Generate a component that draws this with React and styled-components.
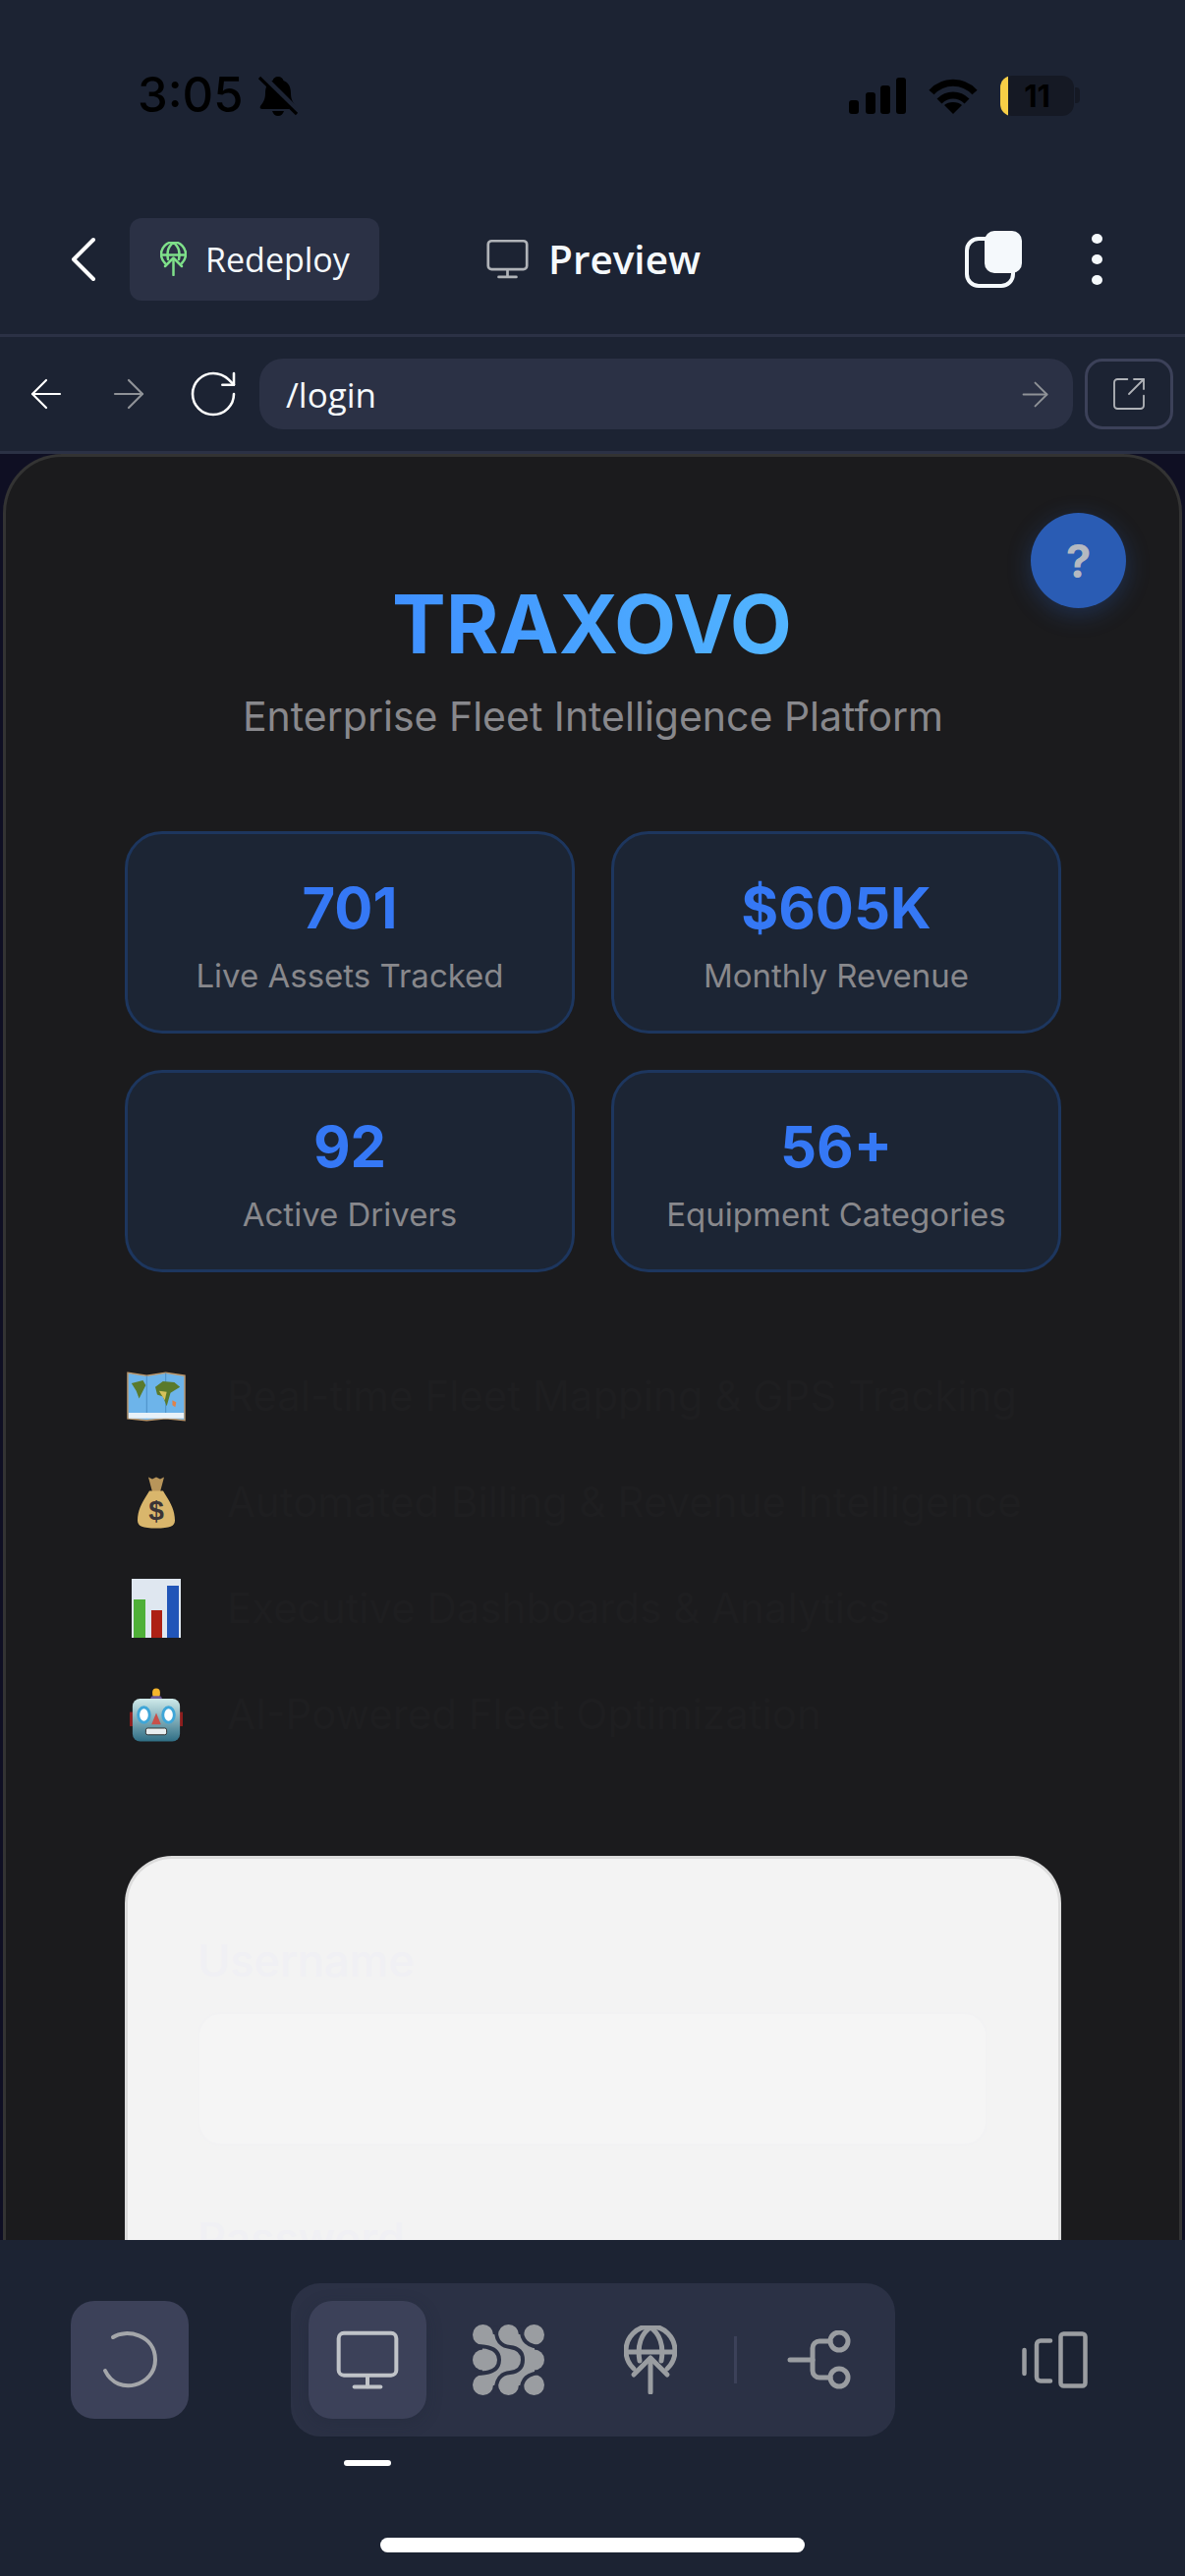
import React from 'react';
import styled, { createGlobalStyle } from 'styled-components';
import {
  ArrowLeft,
  ArrowRight,
  ChevronLeft,
  RotateCw,
  SquareArrowOutUpRight,
} from 'lucide-react';

const GlobalStyle = createGlobalStyle`
  html, body {
    margin: 0;
    padding: 0;
    background: #1c2333;
  }
  * { box-sizing: border-box; }
`;

const Phone = styled.div`
  width: 1206px;
  height: 2622px;
  display: flex;
  flex-direction: column;
  overflow: hidden;
  background: #1c2333;
  font-family: "Open Sans", "Noto Sans", sans-serif;
  color: #f5f9fc;
`;

const StatusBar = styled.div`
  height: 187px;
  flex: none;
  padding: 67px 113px 0 140px;
  display: flex;
  justify-content: space-between;
  align-items: flex-start;
  color: #000;
`;

const Time = styled.div`
  display: flex;
  align-items: center;
  gap: 15px;
  height: 60px;
  font: 500 49px/60px "Inter", sans-serif;
`;

const StatusIcons = styled.div`
  display: flex;
  align-items: center;
  gap: 23px;
  height: 60px;
`;

const Battery = styled.div`
  position: relative;
  width: 75px;
  height: 41px;
  border-radius: 12px;
  background: linear-gradient(90deg, #f7ce46 0 11%, #151924 11%);
  font: 700 31px/41px "Inter", sans-serif;
  text-align: center;

  &::after {
    content: '';
    position: absolute;
    right: -6px;
    top: 12px;
    width: 5px;
    height: 16px;
    border-radius: 0 4px 4px 0;
    background: #151924;
  }
`;

const Header = styled.div`
  height: 156px;
  flex: none;
  padding: 0 84px 0 45px;
  display: flex;
  align-items: center;
  border-bottom: 3px solid #2b3145;
`;

const BackButton = styled.div`
  width: 87px;
  flex: none;
  display: flex;
  color: #fff;
`;

const Redeploy = styled.div`
  width: 254px;
  height: 84px;
  flex: none;
  display: flex;
  align-items: center;
  gap: 19px;
  padding-left: 31px;
  border-radius: 12px;
  background: #2b3145;
  font-size: 34px;
  color: #f5f9fc;
`;

const PreviewTitle = styled.div`
  margin-left: 109px;
  display: flex;
  align-items: center;
  gap: 20px;
  font-size: 40.5px;
  font-weight: 600;
  flex: 1;
`;

const HeaderActions = styled.div`
  display: flex;
  align-items: center;
  gap: 71px;
`;

const DotMenu = styled.div`
  display: flex;
  flex-direction: column;
  gap: 11px;
  span {
    width: 11px;
    height: 10px;
    border-radius: 50%;
    background: #f5f9fc;
  }
`;

const UrlRow = styled.div`
  height: 119px;
  flex: none;
  padding: 0 12px 0 23px;
  display: flex;
  align-items: center;
  border-bottom: 3px solid #2b3145;
`;

const NavIcon = styled.div`
  width: ${(props) => props.$width}px;
  flex: none;
  display: flex;
  color: ${(props) => (props.$muted ? '#8f9297' : '#fff')};
`;

const UrlBox = styled.div`
  width: 828px;
  height: 72px;
  flex: none;
  display: flex;
  align-items: center;
  justify-content: space-between;
  padding: 0 18px 0 27px;
  border-radius: 24px;
  background: #2b3145;
  font-size: 35px;
  color: #f5f9fc;
`;

const OpenButton = styled.div`
  width: 90px;
  height: 72px;
  flex: none;
  margin-left: 12px;
  display: flex;
  align-items: center;
  justify-content: center;
  border: 3px solid #3c4159;
  border-radius: 18px;
  color: #b0b3b8;
`;

const Viewport = styled.div`
  flex: 1;
  min-height: 0;
  overflow: hidden;
  background: #0f0f23;
  padding: 0 3px;
`;

const Panel = styled.div`
  position: relative;
  height: 1900px;
  padding: 130px 120px 0 121px;
  background: #1b1b1d;
  border: 3px solid #333;
  border-bottom: 0;
  border-radius: 60px 60px 0 0;
`;

const HelpButton = styled.div`
  position: absolute;
  top: 57px;
  right: 54px;
  width: 97px;
  height: 97px;
  display: flex;
  align-items: center;
  justify-content: center;
  border-radius: 50%;
  background: #2a5cb4;
  box-shadow: 0 6px 24px rgba(42, 100, 200, 0.3);
  font: 700 46px/1 "Inter", sans-serif;
  color: #b5b9c1;
`;

const Brand = styled.div`
  width: 405px;
  margin-left: 272px;
  white-space: nowrap;
  font: 700 82px/1 "Inter", sans-serif;
  background: linear-gradient(90deg, #3f90ff, #52b5ff);
  -webkit-background-clip: text;
  background-clip: text;
  color: transparent;
`;

const Tagline = styled.div`
  margin-top: 27px;
  text-align: center;
  white-space: nowrap;
  font: 400 41px/50px "Inter", sans-serif;
  color: #88888c;
`;

const StatGrid = styled.div`
  margin-top: 92px;
  display: grid;
  grid-template-columns: 1fr 1fr;
  gap: 37px;
`;

const StatCard = styled.div`
  height: 206px;
  padding-top: 46px;
  text-align: center;
  border: 3px solid #1d365e;
  border-radius: 38px;
  background: #1c2534;
`;

const StatValue = styled.div`
  font: 700 58px/1 "Inter", sans-serif;
  color: #3578f5;
`;

const StatLabel = styled.div`
  margin-top: 20px;
  font: 400 33px/40px "Inter", sans-serif;
  color: #88888c;
`;

const FeatureList = styled.div`
  margin-top: 96px;
  display: flex;
  flex-direction: column;
  gap: 48px;
`;

const FeatureRow = styled.div`
  height: 60px;
  display: flex;
  align-items: center;
  gap: 40px;
`;

const FeatureIcon = styled.div`
  width: 64px;
  flex: none;
  display: flex;
  justify-content: center;
`;

const FeatureText = styled.div`
  white-space: nowrap;
  font: 400 42px/1 "Inter", sans-serif;
  color: #1e1e20;
`;

const LoginCard = styled.div`
  margin-top: 114px;
  height: 800px;
  padding: 79px 72px 0 71px;
  background: #f3f3f3;
  border: 3px solid #dcdcdc;
  border-bottom: 0;
  border-radius: 48px 48px 0 0;
`;

const FieldLabel = styled.div`
  font: 500 45px/50px "Inter", sans-serif;
  color: #f0f0f4;
`;

const FieldInput = styled.div`
  margin-top: 27px;
  margin-bottom: 70px;
  height: 136px;
  background: #f5f5f5;
  border: 2px solid #f2f2f3;
  border-radius: 24px;
`;

const BottomBar = styled.div`
  height: 342px;
  flex: none;
  position: relative;
  background: #1c2333;
  padding: 44px 0 0 72px;
  display: flex;
  align-items: flex-start;
`;

const SpinnerButton = styled.div`
  width: 120px;
  height: 120px;
  flex: none;
  margin-top: 18px;
  display: flex;
  align-items: center;
  justify-content: center;
  border-radius: 24px;
  background: #3c4159;
`;

const Dock = styled.div`
  width: 615px;
  height: 156px;
  flex: none;
  margin-left: 104px;
  padding: 0 45px 0 18px;
  display: flex;
  align-items: center;
  border-radius: 30px;
  background: #2b3145;
`;

const DockActive = styled.div`
  width: 120px;
  height: 120px;
  flex: none;
  display: flex;
  align-items: center;
  justify-content: center;
  border-radius: 24px;
  background: #3c4159;
  box-shadow: 0 4px 16px rgba(28, 35, 51, 0.25);
`;

const DockSlot = styled.div`
  display: flex;
  flex: none;
  margin-left: ${(props) => props.$gap}px;
`;

const DockDivider = styled.div`
  width: 3px;
  height: 48px;
  flex: none;
  margin-left: 58px;
  background: #3c4159;
`;

const PanelToggle = styled.div`
  margin: 49px 0 0 129px;
  display: flex;
`;

const ActiveMark = styled.div`
  position: absolute;
  left: 350px;
  top: 224px;
  width: 48px;
  height: 6px;
  border-radius: 3px;
  background: #fff;
`;

const HomeIndicator = styled.div`
  position: absolute;
  left: 387px;
  top: 303px;
  width: 432px;
  height: 15px;
  border-radius: 8px;
  background: #fff;
`;

const MutedBell = () => (
  <svg width="40" height="41" viewBox="0 0 40 41" fill="#000">
    <path d="M20 1c3 0 5 2 5.5 4C31 7 33 12 33 18c0 6 2 9 5 13 1 2 0 3-2 3H4c-2 0-3-1-2-3 3-4 5-7 5-13 0-6 2-11 7.5-13C15 3 17 1 20 1z" />
    <path d="M14 36h12c-1 3-3 5-6 5s-5-2-6-5z" />
    <path d="M3 0l37 37" stroke="#1c2333" strokeWidth="7" />
    <path d="M1 2l38 37" stroke="#000" strokeWidth="3.2" />
  </svg>
);

const SignalIcon = () => (
  <svg width="58" height="37" viewBox="0 0 58 37" fill="#000">
    <rect x="0" y="23" width="10" height="14" rx="3" />
    <rect x="17" y="15" width="10" height="22" rx="3" />
    <rect x="32" y="8" width="10" height="29" rx="3" />
    <rect x="48" y="0" width="10" height="37" rx="3" />
  </svg>
);

const WifiIcon = () => (
  <svg width="50" height="37" viewBox="0 0 50 37" fill="none" stroke="#000" strokeWidth="7">
    <path d="M3 15C15 2 35 2 47 15" />
    <path d="M11 24c8-8 20-8 28 0" />
    <path d="M25 37l-9-9c4-4 14-4 18 0z" fill="#000" stroke="none" />
  </svg>
);

const GlobeUp = ({ width, height, color }) => (
  <svg width={width} height={height} viewBox="0 0 54 70" fill="none" stroke={color} strokeWidth="5" strokeLinecap="round" strokeLinejoin="round">
    <path d="M10 44A25 25 0 1 1 44 44" />
    <path d="M16 36C13 20 18 8 27 2C36 8 41 20 38 36" />
    <path d="M2 27H52" />
    <path d="M27 35V68" />
    <path d="M10 50L27 33L44 50" />
  </svg>
);

const Monitor = ({ size, color }) => (
  <svg width={size} height={size} viewBox="0 0 24 24" fill="none" stroke={color} strokeWidth="1.5" strokeLinecap="round" strokeLinejoin="round">
    <rect x="1" y="1.8" width="22" height="16.1" rx="2" />
    <path d="M12 18v4.2" />
    <path d="M7 22.3h10" />
  </svg>
);

const TabsIcon = () => (
  <svg width="58" height="58" viewBox="0 0 58 58" fill="none">
    <rect x="2" y="8" width="47" height="48" rx="12" stroke="#f5f9fc" strokeWidth="4" />
    <rect x="20" y="0" width="38" height="43" rx="10" fill="#f5f9fc" />
  </svg>
);

const SpinnerIcon = () => (
  <svg width="56" height="60" viewBox="0 0 56 60" fill="none" stroke="#a4a6aa" strokeWidth="4" strokeLinecap="round">
    <path d="M11 7C24-2 54 4 54 30S16 68 3 41" />
  </svg>
);

const blobDots = [
  [10.5, 10.5],
  [36.5, 10.5],
  [62.5, 10.5],
  [10.5, 36],
  [62.5, 36],
  [10.5, 61.5],
  [36.5, 61.5],
  [62.5, 61.5],
];

const BlobsIcon = () => (
  <svg width="73" height="72" viewBox="0 0 73 72" fill="#9a9da1">
    <rect x="10" y="10" width="53" height="52" />
    {blobDots.map(([cx, cy]) => (
      <circle key={`${cx}-${cy}`} cx={cx} cy={cy} r="10.5" />
    ))}
    <g fill="none" stroke="#2b3145" strokeWidth="4" strokeLinecap="round">
      <path d="M-3 22.5C8 22 27 21 27 36C27 51 8 50-3 49.5" />
      <path d="M23.5 3C23.5 16 28 22 38 23C47 24 51 29 51 36C51 43 47 48 38 49C28 50 23.5 56 23.5 69" />
      <path d="M49.5 3C49.5 16 54 23 76 24" />
      <path d="M49.5 69C49.5 56 54 49 76 48" />
    </g>
  </svg>
);

const BranchIcon = () => (
  <svg width="65" height="60" viewBox="0 0 65 60" fill="none" stroke="#9a9da1" strokeWidth="5" strokeLinecap="round">
    <path d="M3 30H26" />
    <path d="M44 11H33a7 7 0 0 0-7 7v23a7 7 0 0 0 7 7h11" />
    <circle cx="53" cy="11" r="9" />
    <circle cx="53" cy="48" r="9" />
  </svg>
);

const PanelIcon = () => (
  <svg width="67" height="58" viewBox="0 0 67 58" fill="none" stroke="#9a9da1" strokeWidth="4.5" strokeLinecap="round" strokeLinejoin="round">
    <rect x="39.5" y="2.5" width="25" height="53" rx="3" />
    <path d="M29 9.5H19a4 4 0 0 0-4 4v33a4 4 0 0 0 4 4H29" />
    <path d="M2.5 19v24" />
  </svg>
);

const MapEmoji = () => (
  <svg width="60" height="51" viewBox="0 0 62 52">
    <path d="M1 1l20 3 20-3 20 3v47l-20-2-20 2-20-2z" fill="#6db4ea" stroke="#b9966c" strokeWidth="1.5" />
    <path d="M21 4v45M41 1v48" stroke="#4c8ec4" strokeWidth="1" />
    <path d="M5 12l12-3 3 5-7 14-3-8zM30 16l8-6 12 1 6 5-10 6-4 14-4-10-6-2z" fill="#5a7a2c" />
    <path d="M34 20l8 1-2 9z" fill="#d8c25a" />
    <path d="M48 30l4 2-1 5-3-2z" fill="#e0824a" />
    <path d="M2 43h58v6H2z" fill="#e8f1f8" />
  </svg>
);

const MoneyEmoji = () => (
  <svg width="42" height="55" viewBox="0 0 42 54">
    <path d="M13 1l4 2 4-2 4 2 4-2-4 15h-8z" fill="#b8955a" />
    <path d="M14 15h14c3 6 12 16 12 30 0 6-5 8-19 8S2 51 2 45c0-14 9-24 12-30z" fill="#d9b66c" />
    <text x="21" y="44" textAnchor="middle" fontFamily="Liberation Sans, sans-serif" fontSize="28" fontWeight="700" fill="#3a3436">$</text>
  </svg>
);

const ChartEmoji = () => (
  <svg width="50" height="60" viewBox="0 0 50 60">
    <rect width="50" height="60" fill="#dfe7f0" />
    <rect x="2" y="21" width="12" height="39" fill="#4fb038" />
    <rect x="20" y="32" width="11" height="28" fill="#ad2115" />
    <rect x="36" y="7" width="12" height="53" fill="#2155b8" />
  </svg>
);

const RobotEmoji = () => (
  <svg width="54" height="55" viewBox="0 0 56 56">
    <rect x="0" y="25" width="5" height="15" fill="#8e1d1d" />
    <rect x="51" y="25" width="5" height="15" fill="#8e1d1d" />
    <rect x="24" y="0" width="8" height="10" rx="4" fill="#f5b52c" />
    <rect x="22" y="8" width="12" height="6" rx="3" fill="#6a5a96" />
    <defs>
      <linearGradient id="robotFace" x1="0" y1="0" x2="0" y2="1">
        <stop offset="0" stopColor="#cfeaea" />
        <stop offset="1" stopColor="#2f6e85" />
      </linearGradient>
    </defs>
    <rect x="3" y="11" width="50" height="45" rx="8" fill="url(#robotFace)" />
    <ellipse cx="15" cy="28" rx="6" ry="8" fill="#fff" stroke="#3fa6d8" strokeWidth="3" />
    <ellipse cx="41" cy="28" rx="6" ry="8" fill="#fff" stroke="#3fa6d8" strokeWidth="3" />
    <path d="M28 26l5 12H23z" fill="#c9504a" />
    <rect x="17" y="42" width="22" height="7" rx="2" fill="#e8eef0" stroke="#333" />
  </svg>
);

const stats = [
  { value: '701', label: 'Live Assets Tracked' },
  { value: '$605K', label: 'Monthly Revenue' },
  { value: '92', label: 'Active Drivers' },
  { value: '56+', label: 'Equipment Categories' },
];

const features = [
  { icon: <MapEmoji />, text: 'Real-time Fleet Mapping & GPS Tracking' },
  { icon: <MoneyEmoji />, text: 'Automated Billing & Revenue Intelligence' },
  { icon: <ChartEmoji />, text: 'Executive Dashboards & Analytics' },
  { icon: <RobotEmoji />, text: 'AI-Powered Fleet Optimization' },
];

export default function App() {
  return (
    <Phone>
      <GlobalStyle />
      <StatusBar>
        <Time>
          3:05
          <MutedBell />
        </Time>
        <StatusIcons>
          <SignalIcon />
          <WifiIcon />
          <Battery>11</Battery>
        </StatusIcons>
      </StatusBar>

      <Header>
        <BackButton>
          <ChevronLeft size={80} strokeWidth={1.2} />
        </BackButton>
        <Redeploy>
          <GlobeUp width={27} height={35} color="#7fe08a" />
          Redeploy
        </Redeploy>
        <PreviewTitle>
          <Monitor size={43} color="#b0b3b8" />
          Preview
        </PreviewTitle>
        <HeaderActions>
          <TabsIcon />
          <DotMenu>
            <span />
            <span />
            <span />
          </DotMenu>
        </HeaderActions>
      </Header>

      <UrlRow>
        <NavIcon $width={84}>
          <ArrowLeft size={48} strokeWidth={1.1} />
        </NavIcon>
        <NavIcon $width={82} $muted>
          <ArrowRight size={48} strokeWidth={1.1} />
        </NavIcon>
        <NavIcon $width={75}>
          <RotateCw size={56} strokeWidth={1.1} />
        </NavIcon>
        <UrlBox>
          /login
          <NavIcon $width={41} $muted>
            <ArrowRight size={41} strokeWidth={1.1} />
          </NavIcon>
        </UrlBox>
        <OpenButton>
          <SquareArrowOutUpRight size={40} strokeWidth={1.1} />
        </OpenButton>
      </UrlRow>

      <Viewport>
        <Panel>
          <HelpButton>?</HelpButton>
          <Brand>TRAXOVO</Brand>
          <Tagline>Enterprise Fleet Intelligence Platform</Tagline>
          <StatGrid>
            {stats.map((stat) => (
              <StatCard key={stat.label}>
                <StatValue>{stat.value}</StatValue>
                <StatLabel>{stat.label}</StatLabel>
              </StatCard>
            ))}
          </StatGrid>
          <FeatureList>
            {features.map((feature) => (
              <FeatureRow key={feature.text}>
                <FeatureIcon>{feature.icon}</FeatureIcon>
                <FeatureText>{feature.text}</FeatureText>
              </FeatureRow>
            ))}
          </FeatureList>
          <LoginCard>
            <FieldLabel>Username</FieldLabel>
            <FieldInput />
            <FieldLabel>Password</FieldLabel>
          </LoginCard>
        </Panel>
      </Viewport>

      <BottomBar>
        <SpinnerButton>
          <SpinnerIcon />
        </SpinnerButton>
        <Dock>
          <DockActive>
            <Monitor size={64} color="#c0c3c8" />
          </DockActive>
          <DockSlot $gap={47}>
            <BlobsIcon />
          </DockSlot>
          <DockSlot $gap={81}>
            <GlobeUp width={54} height={70} color="#9a9da1" />
          </DockSlot>
          <DockDivider />
          <DockSlot $gap={51}>
            <BranchIcon />
          </DockSlot>
        </Dock>
        <PanelToggle>
          <PanelIcon />
        </PanelToggle>
        <ActiveMark />
        <HomeIndicator />
      </BottomBar>
    </Phone>
  );
}
